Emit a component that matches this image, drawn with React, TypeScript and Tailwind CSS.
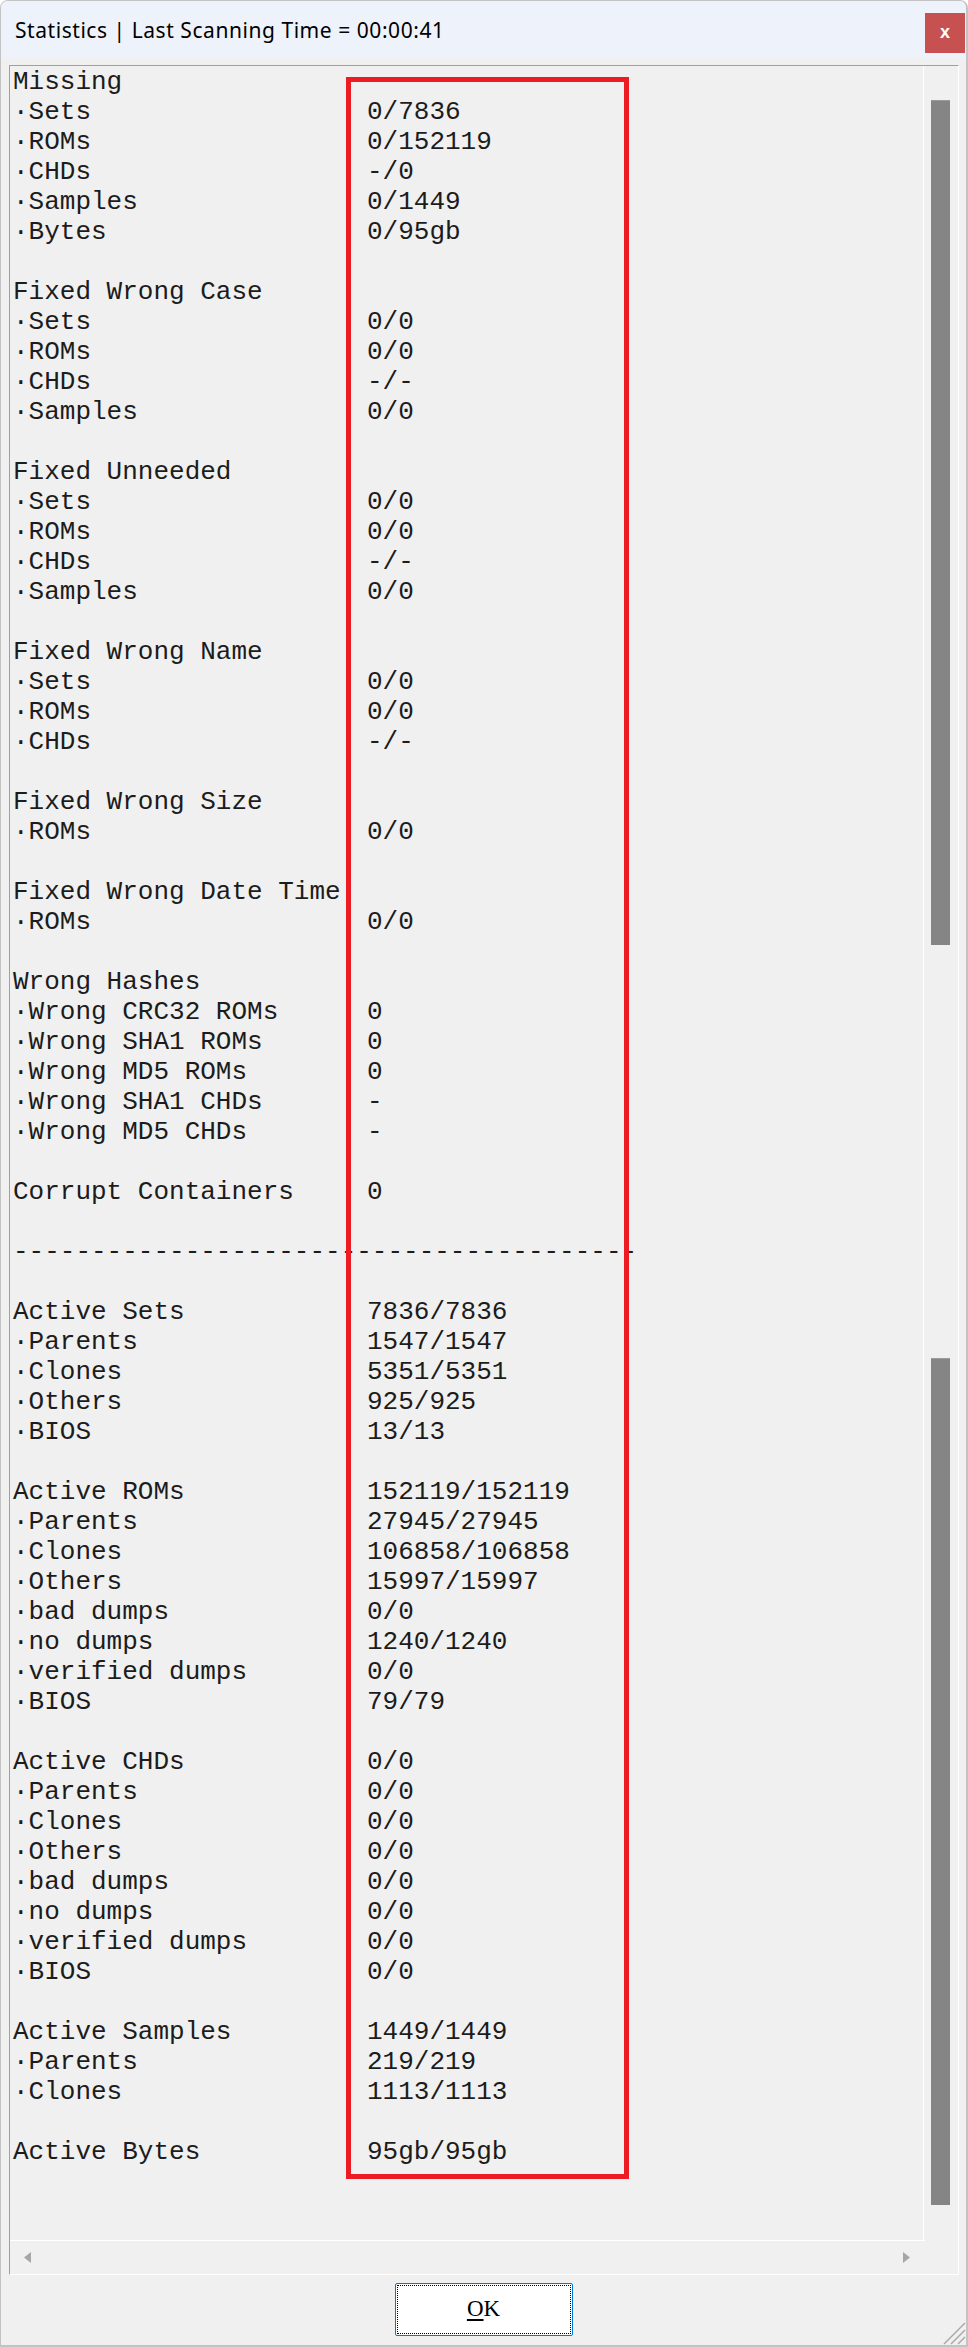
const rows: [string, string][] = [
  ["Missing", ""],
  ["·Sets", "0/7836"],
  ["·ROMs", "0/152119"],
  ["·CHDs", "-/0"],
  ["·Samples", "0/1449"],
  ["·Bytes", "0/95gb"],
  ["", ""],
  ["Fixed Wrong Case", ""],
  ["·Sets", "0/0"],
  ["·ROMs", "0/0"],
  ["·CHDs", "-/-"],
  ["·Samples", "0/0"],
  ["", ""],
  ["Fixed Unneeded", ""],
  ["·Sets", "0/0"],
  ["·ROMs", "0/0"],
  ["·CHDs", "-/-"],
  ["·Samples", "0/0"],
  ["", ""],
  ["Fixed Wrong Name", ""],
  ["·Sets", "0/0"],
  ["·ROMs", "0/0"],
  ["·CHDs", "-/-"],
  ["", ""],
  ["Fixed Wrong Size", ""],
  ["·ROMs", "0/0"],
  ["", ""],
  ["Fixed Wrong Date Time", ""],
  ["·ROMs", "0/0"],
  ["", ""],
  ["Wrong Hashes", ""],
  ["·Wrong CRC32 ROMs", "0"],
  ["·Wrong SHA1 ROMs", "0"],
  ["·Wrong MD5 ROMs", "0"],
  ["·Wrong SHA1 CHDs", "-"],
  ["·Wrong MD5 CHDs", "-"],
  ["", ""],
  ["Corrupt Containers", "0"],
  ["", ""],
  ["----------------------------------------", ""],
  ["", ""],
  ["Active Sets", "7836/7836"],
  ["·Parents", "1547/1547"],
  ["·Clones", "5351/5351"],
  ["·Others", "925/925"],
  ["·BIOS", "13/13"],
  ["", ""],
  ["Active ROMs", "152119/152119"],
  ["·Parents", "27945/27945"],
  ["·Clones", "106858/106858"],
  ["·Others", "15997/15997"],
  ["·bad dumps", "0/0"],
  ["·no dumps", "1240/1240"],
  ["·verified dumps", "0/0"],
  ["·BIOS", "79/79"],
  ["", ""],
  ["Active CHDs", "0/0"],
  ["·Parents", "0/0"],
  ["·Clones", "0/0"],
  ["·Others", "0/0"],
  ["·bad dumps", "0/0"],
  ["·no dumps", "0/0"],
  ["·verified dumps", "0/0"],
  ["·BIOS", "0/0"],
  ["", ""],
  ["Active Samples", "1449/1449"],
  ["·Parents", "219/219"],
  ["·Clones", "1113/1113"],
  ["", ""],
  ["Active Bytes", "95gb/95gb"],
];

const StatisticsDialog = () => {
  return (
    <div className="w-[968px] h-[2347px] bg-[#f0f0f0] flex flex-col border-t border-l border-r-2 border-b-2 border-[#c3c3c3] rounded-t-[8px] overflow-hidden relative">
      {/* Title bar */}
      <div className="h-[56px] shrink-0 bg-[#eef2fa] flex items-center justify-between pl-[14px] pr-[1px]">
        <span className="font-['Noto_Sans',sans-serif] text-[21px] tracking-[0.55px] text-black pt-[4px]">
          Statistics | Last Scanning Time = 00:00:41
        </span>
        <div className="w-[40px] h-[40px] mt-[8px] bg-[#c75050] flex items-center justify-center text-white font-bold text-[18px] leading-none font-['Liberation_Sans',sans-serif] pb-[3px]">
          x
        </div>
      </div>

      {/* Rich text control */}
      <div className="mt-[8px] ml-[8px] w-[950px] h-[2210px] shrink-0 border-t border-l border-t-[#a0a0a0] border-l-[#a0a0a0] border-r border-b border-r-white border-b-white flex flex-col">
        <div className="flex h-[2174px]">
          <div className="relative w-[915px] border-r border-white pl-[3px] pt-[1px] font-['Liberation_Mono',monospace] text-[26px] leading-[30px] text-[#1c1c1c] whitespace-pre">
            {rows.map((row, index) => (
              <div key={index} className="grid grid-cols-[354px_1fr] h-[30px]">
                <span>{row[0]}</span>
                <span>{row[1]}</span>
              </div>
            ))}

            {/* Highlight box */}
            <div className="absolute left-[336px] top-[11px] w-[283px] h-[2102px] border-[5px] border-[#ed1c24]"></div>
          </div>

          {/* Vertical scrollbar */}
          <div className="w-[34px] flex flex-col pl-[7px] pt-[34px]">
            <div className="w-[19px] h-[845px] bg-[#858585] border-t border-[#9a9a9a]"></div>
            <div className="w-[19px] h-[847px] mt-[413px] bg-[#858585] border-t border-[#9a9a9a]"></div>
          </div>
        </div>

        {/* Horizontal scrollbar */}
        <div className="flex">
          <div className="w-[915px] h-[34px] border-t border-white flex items-center justify-between pl-[12px] pr-[13px]">
            <svg width="9" height="11" viewBox="0 0 9 11">
              <polygon points="9,0 9,11 2,5.5" fill="#a6a6a6" />
            </svg>
            <svg width="9" height="11" viewBox="0 0 9 11">
              <polygon points="0,0 0,11 7,5.5" fill="#a6a6a6" />
            </svg>
          </div>
        </div>
      </div>

      {/* Buttons */}
      <div className="flex-1 flex justify-center pt-[8px]">
        <button className="w-[178px] h-[53px] bg-white border border-[#0078d7] rounded-[2px] p-[1px]">
          <div className="w-full h-full border border-dotted border-black flex items-center justify-center font-['Liberation_Serif',serif] text-[23px] text-black">
            <span className="underline underline-offset-[3px]">O</span>K
          </div>
        </button>
      </div>

      {/* Resize grip */}
      <svg className="absolute right-0 bottom-0" width="28" height="28" viewBox="0 0 28 28">
        <line x1="27" y1="6" x2="6" y2="27" stroke="#a8a8a8" strokeWidth="1.5" />
        <line x1="27" y1="13" x2="13" y2="27" stroke="#a8a8a8" strokeWidth="1.5" />
        <line x1="27" y1="20" x2="20" y2="27" stroke="#a8a8a8" strokeWidth="1.5" />
      </svg>
    </div>
  );
};

export default function App() {
  return <StatisticsDialog />;
}
